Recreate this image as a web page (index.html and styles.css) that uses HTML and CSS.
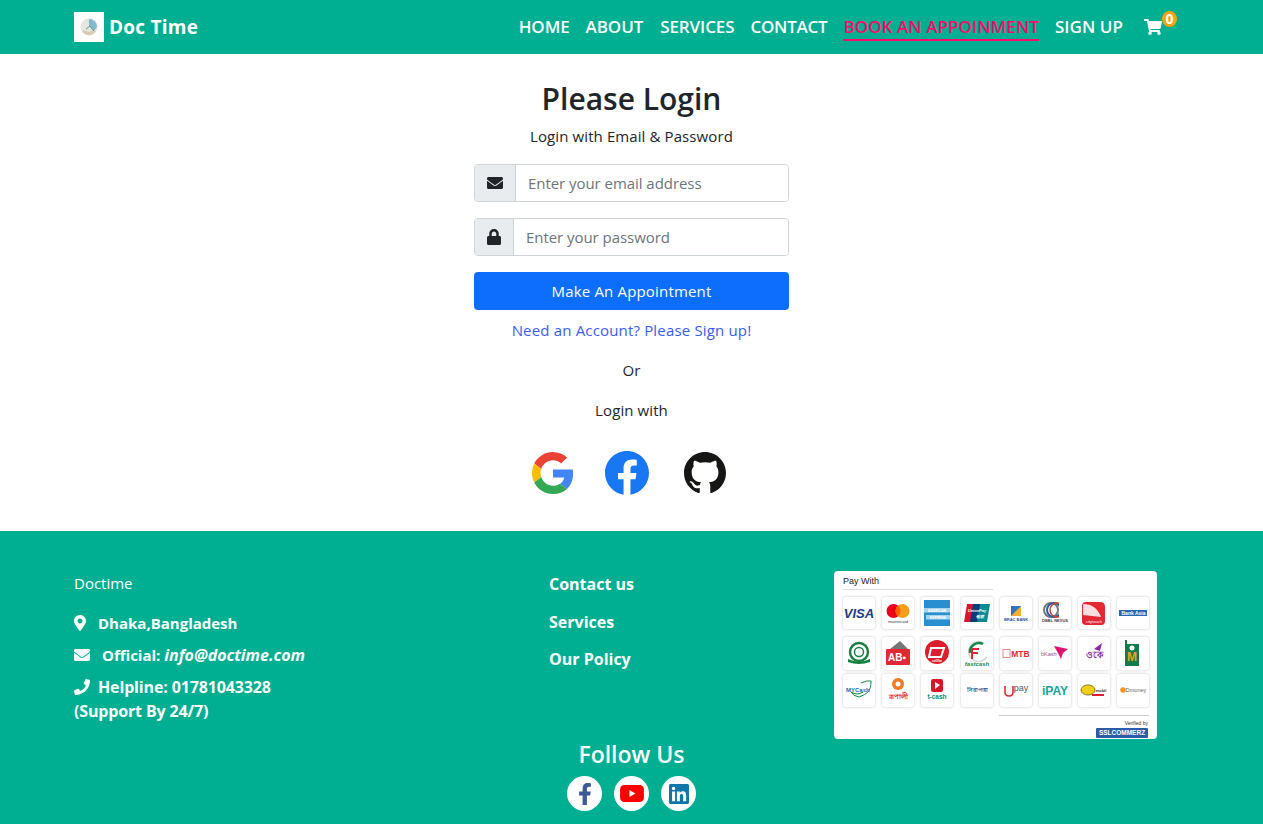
FILE: index.html
```html
<!DOCTYPE html>
<html lang="en">
<head>
<meta charset="utf-8">
<title>Doc Time</title>
<link rel="stylesheet" href="styles.css">
</head>
<body>
<header class="navbar">
  <div class="container nav-inner">
    <a class="brand" href="#">
      <span class="brand-logo">
        <svg viewBox="0 0 30 30" width="30" height="30"><circle cx="15" cy="15" r="8.5" fill="#e4e6df"/><path d="M15 7a8 8 0 0 1 8 8l-3 4-5-5z" fill="#7fbcd0"/><path d="M8 19a8 8 0 0 0 14 0l-3-1-4 2-5-2z" fill="#d9cdb8"/><path d="M12 17l4-3 4 5" stroke="#5d9c8c" stroke-width="1" fill="none"/></svg>
      </span>
      <span>Doc Time</span>
    </a>
    <nav class="nav-links">
      <a href="#" class="nav-link">HOME</a>
      <a href="#" class="nav-link">ABOUT</a>
      <a href="#" class="nav-link nav-services">SERVICES</a>
      <a href="#" class="nav-link nav-contact">CONTACT</a>
      <a href="#" class="nav-link active">BOOK AN APPOINMENT</a>
      <a href="#" class="nav-link nav-signup">SIGN UP</a>
      <a href="#" class="cart">
        <svg class="cart-icon" viewBox="0 0 576 512"><path fill="#fff" d="M528.12 301.319l47.273-208C578.806 78.301 567.391 64 551.99 64H159.208l-9.166-44.81C147.758 8.021 137.93 0 126.529 0H24C10.745 0 0 10.745 0 24v16c0 13.255 10.745 24 24 24h69.883l70.248 343.435C147.325 417.1 136 435.222 136 456c0 30.928 25.072 56 56 56s56-25.072 56-56c0-15.674-6.447-29.835-16.824-40h209.647C430.447 426.165 424 440.326 424 456c0 30.928 25.072 56 56 56s56-25.072 56-56c0-22.172-12.888-41.332-31.579-50.405l5.517-24.276c3.413-15.018-8.002-29.319-23.403-29.319H218.117l-6.545-32h293.145c11.206 0 20.92-7.754 23.403-18.681z"/></svg>
        <span class="badge">0</span>
      </a>
    </nav>
  </div>
</header>

<main class="login">
  <h2 class="login-title">Please Login</h2>
  <p class="login-sub">Login with Email &amp; Password</p>
  <form class="login-form">
    <div class="input-group">
      <span class="addon addon-mail"><svg class="addon-icon" viewBox="0 0 512 512"><path fill="#212529" d="M502.3 190.8c3.9-3.1 9.7-.2 9.7 4.7V400c0 26.5-21.5 48-48 48H48c-26.5 0-48-21.5-48-48V195.6c0-5 5.7-7.8 9.7-4.7 22.4 17.4 52.1 39.5 154.1 113.6 21.1 15.4 56.7 47.8 92.2 47.6 35.7.3 72-32.8 92.3-47.6 102-74.1 131.6-96.3 154-113.7zM256 320c23.2.4 56.6-29.2 73.4-41.4 132.7-96.3 142.8-104.7 173.4-128.7 5.8-4.5 9.2-11.5 9.2-18.9v-19c0-26.5-21.5-48-48-48H48C21.5 64 0 85.5 0 112v19c0 7.4 3.4 14.3 9.2 18.9 30.6 23.9 40.7 32.4 173.4 128.7 16.8 12.2 50.2 41.8 73.4 41.4z"/></svg></span>
      <input class="field" type="email" placeholder="Enter your email address">
    </div>
    <div class="input-group">
      <span class="addon addon-lock"><svg class="addon-icon lock" viewBox="0 0 448 512"><path fill="#212529" d="M400 224h-24v-72C376 68.2 307.8 0 224 0S72 68.2 72 152v72H48c-26.5 0-48 21.5-48 48v192c0 26.5 21.5 48 48 48h352c26.5 0 48-21.5 48-48V272c0-26.5-21.5-48-48-48zm-104 0H152v-72c0-39.7 32.3-72 72-72s72 32.3 72 72v72z"/></svg></span>
      <input class="field" type="password" placeholder="Enter your password">
    </div>
    <button class="submit" type="button">Make An Appointment</button>
  </form>
  <a class="signup" href="#">Need an Account? Please Sign up!</a>
  <p class="plain">Or</p>
  <p class="plain">Login with</p>
  <div class="oauth">
    <svg class="oauth-google" viewBox="0 0 48 48"><path fill="#EA4335" d="M24 9.5c3.54 0 6.71 1.22 9.21 3.6l6.85-6.85C35.9 2.38 30.47 0 24 0 14.62 0 6.51 5.38 2.56 13.22l7.98 6.19C12.43 13.72 17.74 9.5 24 9.5z"/><path fill="#4285F4" d="M46.98 24.55c0-1.57-.15-3.09-.38-4.55H24v9.02h12.94c-.58 2.96-2.26 5.48-4.78 7.18l7.73 6c4.51-4.18 7.09-10.36 7.09-17.65z"/><path fill="#FBBC05" d="M10.53 28.59c-.48-1.45-.76-2.99-.76-4.59s.27-3.14.76-4.59l-7.98-6.19C.92 16.46 0 20.12 0 24c0 3.88.92 7.54 2.56 10.78l7.97-6.19z"/><path fill="#34A853" d="M24 48c6.48 0 11.93-2.13 15.89-5.81l-7.73-6c-2.15 1.45-4.92 2.3-8.16 2.3-6.26 0-11.57-4.22-13.47-9.91l-7.98 6.19C6.51 42.62 14.62 48 24 48z"/></svg>
    <svg class="oauth-fb" viewBox="8 8 496 496"><circle cx="256" cy="256" r="248" fill="#fff"/><path fill="#1877f2" d="M504 256C504 119 393 8 256 8S8 119 8 256c0 123.78 90.69 226.38 209.25 245V327.69h-63V256h63v-54.64c0-62.15 37-96.48 93.67-96.48 27.14 0 55.52 4.84 55.52 4.84v61h-31.28c-30.8 0-40.41 19.12-40.41 38.73V256h68.78l-11 71.69h-57.78V501C413.31 482.38 504 379.78 504 256z"/></svg>
    <svg class="oauth-gh" viewBox="0 0 16 16"><path fill="#161614" d="M8 0C3.58 0 0 3.58 0 8c0 3.54 2.29 6.53 5.47 7.59.4.07.55-.17.55-.38 0-.19-.01-.82-.01-1.49-2.01.37-2.53-.49-2.69-.94-.09-.23-.48-.94-.82-1.13-.28-.15-.68-.52-.01-.53.63-.01 1.08.58 1.23.82.72 1.21 1.87.87 2.33.66.07-.52.28-.87.51-1.07-1.78-.2-3.64-.89-3.64-3.95 0-.87.31-1.59.82-2.15-.08-.2-.36-1.02.08-2.12 0 0 .67-.21 2.2.82.64-.18 1.32-.27 2-.27.68 0 1.36.09 2 .27 1.53-1.04 2.2-.82 2.2-.82.44 1.1.16 1.92.08 2.12.51.56.82 1.27.82 2.15 0 3.07-1.87 3.75-3.65 3.95.29.25.54.73.54 1.48 0 1.07-.01 1.93-.01 2.2 0 .21.15.46.55.38A8.013 8.013 0 0016 8c0-4.42-3.58-8-8-8z"/></svg>
  </div>
</main>

<footer class="footer">
  <div class="container footer-row">
    <div class="col-info">
      <p class="org">Doctime</p>
      <p class="info-line"><svg class="fi fi-pin" viewBox="0 0 384 512"><path fill="#fff" d="M172.268 501.67C26.97 291.031 0 262.429 0 192 0 85.961 85.961 0 192 0s192 85.961 192 192c0 70.429-26.97 99.031-172.268 309.67-9.535 13.774-29.93 13.773-39.464 0zM192 272c44.183 0 80-35.817 80-80s-35.817-80-80-80-80 35.817-80 80 35.817 80 80 80z"/></svg>Dhaka,Bangladesh</p>
      <p class="info-line"><svg class="fi fi-mail" viewBox="0 0 512 512"><path fill="#fff" d="M502.3 190.8c3.9-3.1 9.7-.2 9.7 4.7V400c0 26.5-21.5 48-48 48H48c-26.5 0-48-21.5-48-48V195.6c0-5 5.7-7.8 9.7-4.7 22.4 17.4 52.1 39.5 154.1 113.6 21.1 15.4 56.7 47.8 92.2 47.6 35.7.3 72-32.8 92.3-47.6 102-74.1 131.6-96.3 154-113.7zM256 320c23.2.4 56.6-29.2 73.4-41.4 132.7-96.3 142.8-104.7 173.4-128.7 5.8-4.5 9.2-11.5 9.2-18.9v-19c0-26.5-21.5-48-48-48H48C21.5 64 0 85.5 0 112v19c0 7.4 3.4 14.3 9.2 18.9 30.6 23.9 40.7 32.4 173.4 128.7 16.8 12.2 50.2 41.8 73.4 41.4z"/></svg>Official:&nbsp;<em>info@doctime.com</em></p>
      <p class="info-line info-wide"><svg class="fi fi-phone" viewBox="0 0 512 512"><path fill="#fff" d="M493.4 24.6l-104-24c-11.3-2.6-22.9 3.3-27.5 13.9l-48 112c-4.2 9.8-1.4 21.3 6.9 28l60.6 49.6c-36 76.7-98.9 140.5-177.2 177.2l-49.6-60.6c-6.8-8.3-18.2-11.1-28-6.9l-112 48C3.9 366.5-2 378.1.6 389.4l24 104C27.1 504.2 36.7 512 48 512c256.1 0 464-207.5 464-464 0-11.2-7.7-20.9-18.6-23.4z"/></svg>Helpline: 01781043328</p>
      <p class="info-line info-wide support">(Support By 24/7)</p>
    </div>
    <div class="col-links">
      <a href="#">Contact us</a>
      <a href="#">Services</a>
      <a href="#">Our Policy</a>
    </div>
    <div class="col-pay">
      <div class="pay-card">
        <div class="pay-head">Pay With</div>
        <div class="pay-grid">
          <svg class="tile" viewBox="0 0 32 32"><text x="16" y="20.5" text-anchor="middle" class="t-visa">VISA</text></svg>
          <svg class="tile" viewBox="0 0 32 32"><circle cx="11.5" cy="14" r="7" fill="#eb001b"/><circle cx="20.5" cy="14" r="7" fill="#f79e1b"/><path d="M16 8.6a7 7 0 0 1 0 10.8 7 7 0 0 1 0-10.8z" fill="#ff5f00"/><text x="16" y="25.5" text-anchor="middle" class="t-xs" fill="#333">mastercard</text></svg>
          <svg class="tile" viewBox="0 0 32 32"><rect x="3" y="3" width="26" height="26" fill="#2a8fd0"/><rect x="3" y="11" width="26" height="4.5" fill="#a9d3ec"/><rect x="5" y="18" width="24" height="4.5" fill="#a9d3ec"/><text x="16" y="15" text-anchor="middle" class="t-xxs" fill="#fff">AMERICAN</text><text x="17" y="22" text-anchor="middle" class="t-xxs" fill="#fff">EXPRESS</text></svg>
          <svg class="tile" viewBox="0 0 32 32"><path d="M6 7h8l-3 18H3z" fill="#d7192d"/><path d="M12 7h9l-3 18h-9z" fill="#0b3a7d"/><path d="M19 7h10l-3 18h-10z" fill="#0a8a93"/><text x="16" y="15" text-anchor="middle" class="t-up" fill="#fff">UnionPay</text><text x="19" y="21" text-anchor="middle" class="t-up" fill="#fff">银联</text></svg>
          <svg class="tile" viewBox="0 0 32 32"><rect x="11" y="9" width="10" height="10" fill="#f0b429"/><path d="M11 19l10-10H11z" fill="#2f74c0"/><text x="16" y="24" text-anchor="middle" class="t-xs b" fill="#1c5a9c">BRAC BANK</text></svg>
          <svg class="tile" viewBox="0 0 32 32"><circle cx="12" cy="13" r="7" fill="none" stroke="#777" stroke-width="2"/><circle cx="15" cy="13" r="7" fill="none" stroke="#2860a8" stroke-width="2"/><circle cx="18" cy="13" r="7" fill="none" stroke="#d6402c" stroke-width="1.5"/><path d="M20 6h8v14h-8z" fill="#fff"/><text x="16" y="25" text-anchor="middle" class="t-xs b" fill="#444">DBBL NEXUS</text></svg>
          <svg class="tile" viewBox="0 0 32 32"><path d="M8 5h14q5 0 5 5v14q0 4-4 4H8q-4 0-4-4V9q0-4 4-4z" fill="#e32733"/><path d="M5 7q13 0 18 13L5 18z" fill="#fff" opacity=".85"/><text x="16" y="25.5" text-anchor="middle" class="t-xs" fill="#fff">citytouch</text></svg>
          <svg class="tile" viewBox="0 0 32 32"><rect x="2" y="13" width="28" height="6" fill="#2766b5"/><text x="16.5" y="18" text-anchor="middle" class="t-ba" fill="#fff">Bank Asia</text></svg>
          <svg class="tile" viewBox="0 0 32 33"><circle cx="16" cy="15" r="9" fill="none" stroke="#15803d" stroke-width="2.4"/><circle cx="16" cy="15" r="4.5" fill="none" stroke="#15803d" stroke-width="1.5"/><path d="M5 22q11 5 22 0v3q-11 4-22 0z" fill="#15803d"/></svg>
          <svg class="tile" viewBox="0 0 32 33"><path d="M8 12l10-8 8 8z" fill="#777"/><rect x="4" y="12" width="24" height="16" rx="1" fill="#e32733"/><text x="15" y="24" text-anchor="middle" class="t-ab" fill="#fff">AB▪</text></svg>
          <svg class="tile" viewBox="0 0 32 33"><circle cx="16" cy="15" r="12" fill="#dc1f2d"/><path d="M10 11h13l-3 9H8z" fill="none" stroke="#fff" stroke-width="2"/><text x="16" y="25" text-anchor="middle" class="t-xxs" fill="#fff">cellfin</text></svg>
          <svg class="tile" viewBox="0 0 32 33"><path d="M23 6a10 10 0 1 0 3 14" fill="none" stroke="#d6d6d6" stroke-width="1.5"/><path d="M22 7a9 9 0 0 0-13 9" fill="none" stroke="#148a46" stroke-width="2.5"/><path d="M11 12h7M11 12v10M11 16h6" fill="none" stroke="#e32733" stroke-width="2"/><text x="16" y="29" text-anchor="middle" class="t-fc" fill="#148a46">fastcash</text></svg>
          <svg class="tile" viewBox="0 0 32 33"><rect x="3" y="12.5" width="7" height="8" fill="none" stroke="#e58a8a"/><text x="20.5" y="20" text-anchor="middle" class="t-mtb" fill="#e32733">MTB</text></svg>
          <svg class="tile" viewBox="0 0 32 33"><text x="2" y="19" class="t-bk" fill="#8a5a78">bKash</text><path d="M15 9l14 3-5 4-2 6-3-6z" fill="#e2136e"/></svg>
          <svg class="tile" viewBox="0 0 32 33"><path d="M24 6l-2 8-6-2z" fill="#8a2a9c"/><text x="16" y="21" text-anchor="middle" class="t-ok" fill="#8a2a9c">ওকে</text></svg>
          <svg class="tile" viewBox="0 0 32 33"><rect x="8" y="3" width="2" height="4" fill="#117c4a"/><rect x="8" y="7" width="14" height="22" fill="#117c4a"/><circle cx="15" cy="11" r="2.5" fill="#fff"/><text x="15" y="24" text-anchor="middle" class="t-m" fill="#f0a020">M</text></svg>
          <svg class="tile" viewBox="0 0 32 33"><path d="M18 9q6-3 10-2 0 8-3 11t-9 5q-6-1-8-5 6 4 12 0" fill="none" stroke="#148a46" stroke-width="1"/><text x="3" y="18" class="t-my" fill="#2766b5">MYCash</text></svg>
          <svg class="tile" viewBox="0 0 32 33"><circle cx="16" cy="10" r="6" fill="#f47a20"/><circle cx="16" cy="10" r="2.5" fill="#fff"/><text x="16" y="25" text-anchor="middle" class="t-nag" fill="#dc1f2d">রূপালী</text></svg>
          <svg class="tile" viewBox="0 0 32 33"><rect x="10" y="5" width="12" height="13" rx="2" fill="#d6182b"/><path d="M14 8v7l5-4z" fill="#fff"/><text x="16" y="25" text-anchor="middle" class="t-tc" fill="#148a6a">t-cash</text></svg>
          <svg class="tile" viewBox="0 0 32 33"><text x="16" y="18" text-anchor="middle" class="t-nit" fill="#1c5a9c">নিরাপত্তা</text></svg>
          <svg class="tile" viewBox="0 0 32 33"><path d="M5 12v6q0 4 4 4t4-4v-6" fill="none" stroke="#e32733" stroke-width="1.6"/><text x="21" y="17" text-anchor="middle" class="t-up2" fill="#555">pay</text></svg>
          <svg class="tile" viewBox="0 0 32 33"><text x="16" y="21" text-anchor="middle" class="t-ipay" fill="#10a8a0">iPAY</text></svg>
          <svg class="tile" viewBox="0 0 32 33"><ellipse cx="10" cy="16" rx="7" ry="5" fill="#f2cf1d" stroke="#8a7a10"/><text x="23" y="18" text-anchor="middle" class="t-xs b" fill="#333">mobil</text><rect x="14" y="20" width="12" height="2" fill="#dc1f2d"/></svg>
          <svg class="tile" viewBox="0 0 32 33"><circle cx="6" cy="16" r="2.8" fill="#f39a1e"/><text x="19" y="18" text-anchor="middle" class="t-dm" fill="#666">Dmoney</text></svg>
        </div>
        <div class="pay-foot">
          <span class="verified">Verified by</span>
          <span class="ssl">SSLCOMMERZ</span>
        </div>
      </div>
    </div>
  </div>
  <div class="follow">
    <h3 class="follow-title">Follow Us</h3>
    <div class="socials">
      <a class="social" href="#"><svg class="s-fb" viewBox="0 0 320 512"><path fill="#3b5998" d="M279.14 288l14.22-92.66h-88.91v-60.13c0-25.35 12.42-50.06 52.24-50.06h40.42V6.26S260.43 0 225.36 0c-73.22 0-121.08 44.38-121.08 124.72v70.62H22.89V288h81.39v224h100.17V288z"/></svg></a>
      <a class="social" href="#"><svg class="s-yt" viewBox="0 0 28 20"><rect width="28" height="20" rx="5" fill="#f00"/><path d="M11 6l7 4-7 4z" fill="#fff"/></svg></a>
      <a class="social" href="#"><svg class="s-in" viewBox="0 32 448 448"><path fill="#0e76a8" d="M416 32H31.9C14.3 32 0 46.5 0 64.3v383.4C0 465.5 14.3 480 31.9 480H416c17.6 0 32-14.5 32-32.3V64.3c0-17.8-14.4-32.3-32-32.3zM135.4 416H69V202.2h66.5V416zm-33.2-243c-21.3 0-38.5-17.3-38.5-38.5S80.9 96 102.2 96c21.2 0 38.5 17.3 38.5 38.5 0 21.3-17.2 38.5-38.5 38.5zm282.1 243h-66.4V312c0-24.8-.5-56.7-34.5-56.7-34.6 0-39.9 27-39.9 54.9V416h-66.4V202.2h63.7v29.2h.9c8.9-16.8 30.6-34.5 62.9-34.5 67.2 0 79.7 44.3 79.7 101.9V416z"/></svg></a>
    </div>
  </div>
</footer>
</body>
</html>
```

FILE: styles.css
```css
* { box-sizing: border-box; }
html, body { margin: 0; padding: 0; }
body {
  font-family: "Open Sans", "Noto Sans", "Liberation Sans", sans-serif;
  font-size: 15px;
  line-height: 24px;
  color: #212529;
  background: #fff;
  overflow-x: hidden;
}
a { text-decoration: none; }
p { margin: 0; }

.container { width: 1140px; margin: 0 auto; padding: 0 12.5px; }

/* navbar */
.navbar { background: #00af91; height: 54px; }
.nav-inner { display: flex; justify-content: space-between; align-items: center; height: 54px; }
.brand { display: flex; align-items: center; gap: 5px; color: #fff; font-size: 19px; font-weight: 700; letter-spacing: .25px; }
.brand-logo { display: block; width: 30px; height: 30px; background: #fff; }
.brand-logo svg { display: block; }
.nav-links { display: flex; align-items: center; gap: 16px; padding-right: 27px; }
.nav-link { color: #fff; font-size: 17px; font-weight: 600; letter-spacing: -.1px; line-height: 24px; border-bottom: 2px solid transparent; margin-top: 2px; }
.nav-services { margin-left: 1px; }
.nav-contact { letter-spacing: -.25px; }
.nav-signup { letter-spacing: .05px; }
.nav-link.active { color: #ff0a6c; border-bottom-color: #ff0a6c; letter-spacing: .07px; }
.cart { display: block; position: relative; width: 18px; height: 16px; margin-left: 5px; }
.cart-icon { display: block; width: 18px; height: 16px; }
.badge { position: absolute; left: 18px; top: -8px; width: 15px; height: 16px; border-radius: 50%; background: #f5a30b; color: #fff; font-size: 14px; font-weight: 700; line-height: 16px; text-align: center; }

/* login */
.login { display: flex; flex-direction: column; align-items: center; height: 477px; padding-top: 26px; }
.login-title { margin: 0; font-size: 30px; font-weight: 600; line-height: 38px; color: #212529; }
.login-sub { margin-top: 6px; letter-spacing: .1px; }
.login-form { width: 315px; margin-top: 16px; display: flex; flex-direction: column; gap: 16px; }
.input-group { display: flex; height: 38px; border: 1px solid #ced4da; border-radius: 4px; overflow: hidden; }
.addon { display: flex; align-items: center; justify-content: center; background: #e9ecef; border-right: 1px solid #ced4da; flex: none; }
.addon-mail { width: 41px; }
.addon-lock { width: 39px; }
.addon-icon { display: block; width: 16px; height: 16px; }
.addon-icon.lock { width: 14px; }
.field { flex: 1; min-width: 0; border: 0; outline: 0; padding: 0 12px; font: inherit; letter-spacing: -.05px; color: #212529; background: #fff; }
.field::placeholder { color: #6c757d; opacity: 1; }
.submit { height: 38px; border: 0; border-radius: 4px; background: #0d6efd; color: #fff; font: inherit; letter-spacing: .17px; }
.signup { margin-top: 8px; color: #3a5cf5; letter-spacing: .17px; }
.plain { margin-top: 16px; letter-spacing: .1px; }
.oauth { display: flex; align-items: center; margin-top: 29px; padding-right: 6px; }
.oauth-google { display: block; width: 42px; height: 42px; }
.oauth-fb { display: block; width: 44px; height: 44px; margin-left: 31px; }
.oauth-gh { display: block; width: 42px; height: 42px; margin-left: 35px; }

/* footer */
.footer { background: #00af91; color: #fff; height: 293px; padding-top: 40px; overflow: hidden; }
.footer-row { display: grid; grid-template-columns: 475px 285px 1fr; height: 168px; }
.org { margin-bottom: 16px; }
.info-line { display: flex; align-items: center; font-weight: 700; margin-bottom: 8px; white-space: pre; }
.info-line em { font-style: italic; font-size: 16px; }
.info-wide { font-size: 16px; letter-spacing: -.15px; }
.support { margin-top: -8px; }
.fi { display: block; height: 16px; flex: none; }
.fi-pin { width: 12px; margin-right: 12px; }
.fi-mail { width: 16px; margin-right: 12px; }
.fi-phone { width: 16px; margin-right: 8px; }
.col-links { display: flex; flex-direction: column; gap: 13.5px; padding-top: 1px; }
.col-links a { color: #fff; font-size: 16px; font-weight: 700; }
.pay-card { width: 323px; height: 168px; background: #fff; border-radius: 4px; padding: 5px 8px 0 9px; display: flex; flex-direction: column; color: #222; }
.pay-head { width: 150px; height: 14px; font-size: 9px; line-height: 11px; font-family: "Liberation Sans", sans-serif; border-bottom: 1px solid #ddd; }
.pay-grid { display: grid; grid-template-columns: repeat(8, 32px); grid-template-rows: 40px 37px 33px; column-gap: 7.2px; margin-top: 7px; }
.tile { display: block; width: 32px; height: 33px; background: #fff; border-radius: 3px; box-shadow: 0 0 3px rgba(0,0,0,.22); }
.tile:nth-child(-n+8) { height: 32px; }
.pay-foot { margin: 8px 0 0 156px; width: 150px; padding-right: 1px; border-top: 1px solid #ccc; display: flex; flex-direction: column; align-items: flex-end; font-family: "Liberation Sans", sans-serif; }
.verified { font-size: 5px; line-height: 8px; margin-top: 3px; color: #333; }
.ssl { width: 52px; height: 10px; margin-top: 1px; background: #2b5ca8; color: #fff; border-radius: 1px; font-size: 6.5px; line-height: 10px; font-weight: 700; text-align: center; }
.follow { display: flex; flex-direction: column; align-items: center; }
.follow-title { margin: 0; font-size: 23px; font-weight: 600; line-height: 30px; }
.socials { display: flex; gap: 12px; margin-top: 7px; }
.social { display: flex; align-items: center; justify-content: center; width: 35px; height: 35px; background: #fff; border-radius: 50%; }
.s-fb { display: block; width: 14px; height: 22px; }
.s-yt { display: block; width: 24px; height: 17px; }
.s-in { display: block; width: 20px; height: 20px; }

/* payment tile text */
.tile text { font-family: "Liberation Sans", sans-serif; }
.t-visa { font-size: 13px; font-weight: 700; font-style: italic; fill: #1a3a8a; }
.t-xs { font-size: 4px; }
.t-xxs { font-size: 3.4px; font-weight: 700; }
.b { font-weight: 700; }
.t-ba { font-size: 5px; font-weight: 700; }
.t-up { font-size: 4px; font-weight: 700; font-style: italic; }
.t-ab { font-size: 10px; font-weight: 700; }
.t-fc { font-size: 6px; font-weight: 700; font-style: italic; }
.t-mtb { font-size: 8.5px; font-weight: 700; }
.t-bk { font-size: 5.5px; }
.t-ok { font-size: 9px; font-weight: 700; }
.t-m { font-size: 12px; font-weight: 700; }
.t-my { font-size: 6px; font-weight: 700; }
.t-nag { font-size: 7px; font-weight: 700; }
.t-tc { font-size: 6.5px; font-weight: 700; }
.t-nit { font-size: 5.5px; font-weight: 700; }
.t-up2 { font-size: 9px; }
.t-ipay { font-size: 12px; font-weight: 700; }
.t-dm { font-size: 5.6px; }
```
